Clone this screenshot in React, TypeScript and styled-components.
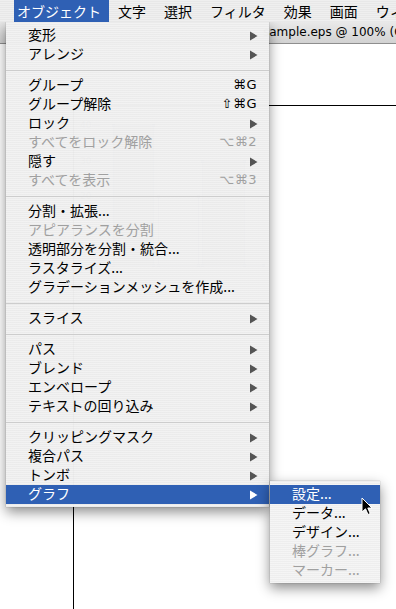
import React from "react";
import styled, { createGlobalStyle, css } from "styled-components";

const GlobalStyle = createGlobalStyle`
  html, body { margin: 0; padding: 0; background: #fff; }
  body { overflow: hidden; }
`;

const JP = `"Noto Sans CJK JP", "Noto Sans", sans-serif`;
const BLUE = "#2f60b4";

const stripes = (a: string, b: string) => css`
  background-color: ${a};
  background-image: repeating-linear-gradient(
    to bottom,
    ${a} 0px,
    ${a} 1px,
    ${b} 1px,
    ${b} 2px
  );
`;

const Screen = styled.div`
  position: relative;
  width: 396px;
  height: 609px;
  overflow: hidden;
  background: #fff;
  font-family: ${JP};
  display: flex;
  flex-direction: column;
`;

const MenuBar = styled.div`
  height: 22px;
  box-sizing: border-box;
  padding: 0 0 1px 14px;
  flex: none;
  display: flex;
  align-items: stretch;
  ${stripes("#efefef", "#e8e8e8")}
  font-size: 14px;
  color: #000;
  position: relative;
  z-index: 3;
`;

const MenuTitle = styled.div<{ $active?: boolean }>`
  display: flex;
  align-items: center;
  padding: 0 9px;
  white-space: nowrap;
  ${(p) =>
    p.$active &&
    css`
      background: ${BLUE};
      color: #fff;
      padding: 0 8px 0 3px;
      margin-bottom: -1px;
    `}
`;

const Window = styled.div`
  flex: 1;
  display: flex;
  flex-direction: column;
`;

const TitleBar = styled.div`
  height: 21px;
  flex: none;
  display: flex;
  align-items: center;
  padding-left: 263px;
  background: linear-gradient(to bottom, #e9e9e9, #d2d2d2);
  border-bottom: 1px solid #8e8e8e;
  font-family: "DejaVu Sans", sans-serif;
  font-size: 12px;
  color: #000;
  white-space: nowrap;
  overflow: hidden;
`;

const Canvas = styled.div`
  flex: 1;
  display: flex;
  padding: 61px 0 0 73px;
  background: #fff;
`;

const Artboard = styled.div`
  flex: 1;
  border-top: 1px solid #000;
  border-left: 1px solid #000;
`;

const Dropdown = styled.div`
  position: absolute;
  left: 6px;
  top: 22px;
  width: 263px;
  padding: 4px 0 3px;
  display: flex;
  flex-direction: column;
  ${stripes("rgba(235,235,235,0.86)", "rgba(243,243,243,0.86)")}
  box-shadow: 0 5px 12px rgba(0, 0, 0, 0.45), 0 0 1px rgba(0, 0, 0, 0.35);
  z-index: 2;
`;

const Submenu = styled(Dropdown)`
  left: 270px;
  top: 481px;
  width: 110px;
  ${stripes("rgba(238,238,238,0.96)", "rgba(245,245,245,0.96)")}
  z-index: 4;
`;

const Row = styled.div<{ $active?: boolean; $disabled?: boolean }>`
  box-sizing: border-box;
  height: 19px;
  display: grid;
  grid-template-columns: 1fr auto;
  align-items: center;
  padding: 0 11px 2px 22px;
  font-size: 14px;
  line-height: 17px;
  white-space: nowrap;
  color: ${(p) => (p.$disabled ? "#a0a0a0" : "#000")};
  ${(p) =>
    p.$active &&
    css`
      background: ${BLUE};
      color: #fff;
    `}
`;

const Label = styled.span``;

const Shortcut = styled.span`
  font-family: "DejaVu Sans", sans-serif;
  font-size: 13px;
  letter-spacing: 0.5px;
  margin-right: 1px;
`;

const ArrowCell = styled.span`
  display: flex;
  align-items: center;
  padding-top: 2px;
`;

const Separator = styled.div`
  height: 12px;
  display: flex;
  align-items: center;
  &::after {
    content: "";
    flex: 1;
    height: 1px;
    background: #cdcdcd;
  }
`;

const ArrowSvg = styled.svg<{ $active?: boolean }>`
  display: block;
  fill: ${(p) => (p.$active ? "#fff" : "#555")};
`;

const Cursor = styled.svg`
  position: absolute;
  left: 361px;
  top: 497px;
  z-index: 5;
`;

type Item =
  | { label: string; shortcut?: string; sub?: boolean; disabled?: boolean; active?: boolean }
  | "sep";

const items: Item[] = [
  { label: "変形", sub: true },
  { label: "アレンジ", sub: true },
  "sep",
  { label: "グループ", shortcut: "⌘G" },
  { label: "グループ解除", shortcut: "⇧⌘G" },
  { label: "ロック", sub: true },
  { label: "すべてをロック解除", shortcut: "⌥⌘2", disabled: true },
  { label: "隠す", sub: true },
  { label: "すべてを表示", shortcut: "⌥⌘3", disabled: true },
  "sep",
  { label: "分割・拡張..." },
  { label: "アピアランスを分割", disabled: true },
  { label: "透明部分を分割・統合..." },
  { label: "ラスタライズ..." },
  { label: "グラデーションメッシュを作成..." },
  "sep",
  { label: "スライス", sub: true },
  "sep",
  { label: "パス", sub: true },
  { label: "ブレンド", sub: true },
  { label: "エンベロープ", sub: true },
  { label: "テキストの回り込み", sub: true },
  "sep",
  { label: "クリッピングマスク", sub: true },
  { label: "複合パス", sub: true },
  { label: "トンボ", sub: true },
  { label: "グラフ", sub: true, active: true },
];

const subItems = [
  { label: "設定...", active: true },
  { label: "データ..." },
  { label: "デザイン..." },
  { label: "棒グラフ...", disabled: true },
  { label: "マーカー...", disabled: true },
];

const titles = ["オブジェクト", "文字", "選択", "フィルタ", "効果", "画面", "ウィンドウ"];

const Arrow = ({ active }: { active?: boolean }) => (
  <ArrowCell>
    <ArrowSvg $active={active} width="8" height="10" viewBox="0 0 8 10">
      <polygon points="0,0.5 7.5,5 0,9.5" />
    </ArrowSvg>
  </ArrowCell>
);

// artboard origin is at (74,106) in page coordinates
const ox = 74;
const oy = 106;
const Chart = () => {
  const sel = "#8a96c8";
  const bars = [
    { x: 113, y: 125, w: 40, fill: "#c4c4c4" },
    { x: 158, y: 196, w: 40, fill: "#ffffff" },
    { x: 202, y: 161, w: 42, fill: "#cccccc" },
  ];
  const base = 265;
  return (
    <svg width="323" height="503" style={{ display: "block" }}>
      <g transform={`translate(${-ox},${-oy})`}>
        {[
          { v: "40", y: 125 },
          { v: "30", y: 161 },
          { v: "20", y: 196 },
        ].map((t) => (
          <g key={t.v}>
            <text x="80" y={t.y + 3} fontSize="9" fill="#666" fontFamily="DejaVu Sans, sans-serif">
              {t.v}
            </text>
            <line x1="92" y1={t.y + 0.5} x2="100" y2={t.y + 0.5} stroke={sel} strokeWidth="1" />
          </g>
        ))}
        {bars.map((b) => (
          <rect
            key={b.x}
            x={b.x + 0.5}
            y={b.y + 0.5}
            width={b.w}
            height={base - b.y}
            fill={b.fill}
            stroke={sel}
            strokeWidth="1"
          />
        ))}
        <line x1="100" y1={base + 0.5} x2="264" y2={base + 0.5} stroke={sel} />
        {[113, 153, 158, 198, 202, 244, 263].map((x) => (
          <rect key={x} x={x - 1} y={base - 1} width="3" height="3" fill={sel} />
        ))}
        {[
          [113, 125],
          [153, 125],
          [158, 196],
          [198, 196],
          [202, 161],
          [244, 161],
        ].map(([x, y]) => (
          <rect key={`${x}-${y}`} x={x - 1} y={y - 1} width="3" height="3" fill={sel} />
        ))}
      </g>
    </svg>
  );
};

export default function App() {
  return (
    <>
      <GlobalStyle />
      <Screen>
        <MenuBar>
          {titles.map((t, i) => (
            <MenuTitle key={t} $active={i === 0}>
              {t}
            </MenuTitle>
          ))}
        </MenuBar>
        <Window>
          <TitleBar>sample.eps @ 100% (CMYK/プレビュー)</TitleBar>
          <Canvas>
            <Artboard>
              <Chart />
            </Artboard>
          </Canvas>
        </Window>

        <Dropdown>
          {items.map((it, i) =>
            it === "sep" ? (
              <Separator key={`s${i}`} />
            ) : (
              <Row key={it.label} $active={it.active} $disabled={it.disabled}>
                <Label>{it.label}</Label>
                {it.shortcut ? (
                  <Shortcut>{it.shortcut}</Shortcut>
                ) : it.sub ? (
                  <Arrow active={it.active} />
                ) : (
                  <span />
                )}
              </Row>
            )
          )}
        </Dropdown>

        <Submenu>
          {subItems.map((it) => (
            <Row key={it.label} $active={it.active} $disabled={it.disabled}>
              <Label>{it.label}</Label>
              <span />
            </Row>
          ))}
        </Submenu>

        <Cursor width="13" height="19" viewBox="0 0 13 19">
          <path
            d="M1 1 L1 15 L4.5 11.8 L7 17.5 L9.2 16.5 L6.8 11 L11 11 Z"
            fill="#000"
            stroke="#fff"
            strokeWidth="1"
            strokeLinejoin="round"
          />
        </Cursor>
      </Screen>
    </>
  );
}
